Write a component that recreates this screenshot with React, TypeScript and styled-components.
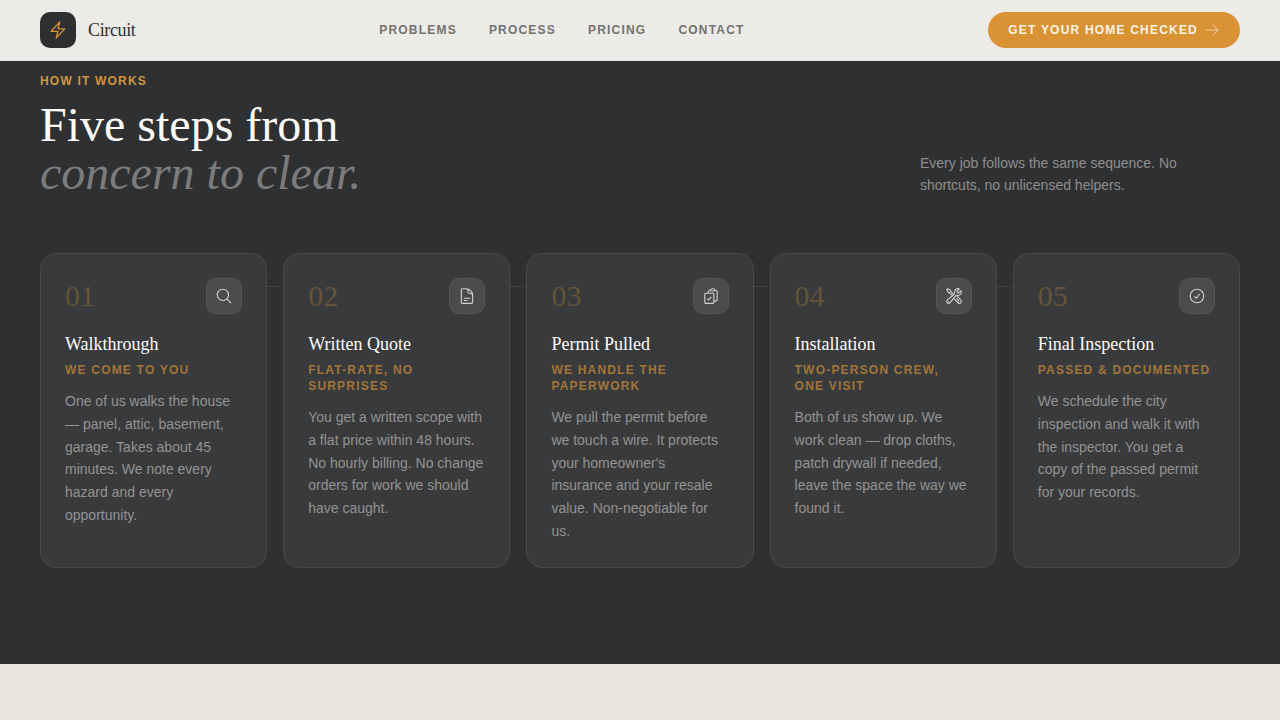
import React from "react";
import styled, { createGlobalStyle } from "styled-components";
import {
  HiOutlineArrowRight,
  HiOutlineBolt,
  HiOutlineCheckCircle,
  HiOutlineClipboardDocumentCheck,
  HiOutlineDocumentText,
  HiOutlineMagnifyingGlass,
  HiOutlineWrenchScrewdriver,
} from "react-icons/hi2";

const Global = createGlobalStyle`
  html, body {
    margin: 0;
    height: 720px;
    overflow: hidden;
    background: #e8e5de;
  }
  * {
    box-sizing: border-box;
  }
`;

const Nav = styled.header`
  height: 61px;
  padding: 0 40px;
  display: flex;
  justify-content: space-between;
  align-items: center;
  background: #ecebe7;
  border-bottom: 1px solid #e4e2dc;
`;

const Brand = styled.div`
  display: flex;
  align-items: center;
  gap: 12px;
`;

const Logo = styled.div`
  width: 36px;
  height: 36px;
  border-radius: 10px;
  background: #2e2f31;
  color: #d99335;
  display: flex;
  align-items: center;
  justify-content: center;
`;

const BrandName = styled.span`
  font-family: "Liberation Serif", serif;
  font-size: 18px;
  letter-spacing: -0.36px;
  color: #2e2f31;
`;

const Links = styled.nav`
  display: flex;
  gap: 32px;
`;

const NavLink = styled.a`
  font-family: "Liberation Sans", sans-serif;
  font-size: 12px;
  font-weight: 700;
  letter-spacing: 1.2px;
  color: #73726f;
`;

const Cta = styled.button`
  height: 36px;
  padding: 0 20px;
  border: 0;
  border-radius: 18px;
  background: #d99335;
  color: #fbf3e4;
  display: flex;
  align-items: center;
  gap: 6px;
  font-family: "Liberation Sans", sans-serif;
  font-size: 12px;
  font-weight: 700;
  letter-spacing: 1.2px;

  svg {
    opacity: 0.6;
  }
`;

const Section = styled.section`
  height: 603px;
  padding: 12px 40px 0;
  background: #2f3032;
`;

const Eyebrow = styled.div`
  font-family: "Liberation Sans", sans-serif;
  font-size: 12px;
  font-weight: 700;
  line-height: 16px;
  letter-spacing: 1.2px;
  color: #d09540;
`;

const Head = styled.div`
  margin-top: 12px;
  display: flex;
  justify-content: space-between;
  align-items: flex-end;
`;

const Title = styled.h2`
  margin: 0;
  font-family: "Liberation Serif", serif;
  font-size: 48px;
  font-weight: 400;
  line-height: 48px;
  color: #fdfcfa;
`;

const TitleSoft = styled.em`
  display: block;
  color: #7b7c7d;
`;

const Lede = styled.p`
  margin: 0 0 1px;
  width: 320px;
  font-family: "Liberation Sans", sans-serif;
  font-size: 14px;
  line-height: 22px;
  color: #8e8e8e;
`;

const Cards = styled.div`
  margin-top: 56px;
  display: grid;
  grid-template-columns: repeat(5, 1fr);
  gap: 16px;
`;

const Card = styled.article`
  position: relative;
  height: 315px;
  padding: 24px;
  background: #393a3c;
  border: 1px solid #48494b;
  border-radius: 16px;
`;

const Connector = styled.span`
  position: absolute;
  top: 32px;
  left: 100%;
  width: 17px;
  height: 1px;
  background: linear-gradient(90deg, #4a4a46, #3a3a38);
`;

const CardTop = styled.div`
  display: flex;
  justify-content: space-between;
  align-items: flex-start;
`;

const Num = styled.span`
  margin-top: 1px;
  font-family: "Liberation Serif", serif;
  font-size: 30px;
  line-height: 34px;
  color: #655439;
`;

const IconBox = styled.div`
  width: 36px;
  height: 36px;
  border-radius: 10px;
  background: #4a4b4c;
  border: 1px solid #555657;
  color: #cfcfce;
  display: flex;
  align-items: center;
  justify-content: center;
`;

const StepName = styled.h3`
  margin: 18px 0 0;
  font-family: "Liberation Serif", serif;
  font-size: 18px;
  font-weight: 400;
  line-height: 24px;
  color: #fdfcfa;
`;

const Tag = styled.div`
  margin-top: 6px;
  font-family: "Liberation Sans", sans-serif;
  font-size: 12px;
  font-weight: 700;
  line-height: 16px;
  letter-spacing: 1.2px;
  color: #a27539;
`;

const Body = styled.p`
  margin: 12px 0 0;
  font-family: "Liberation Sans", sans-serif;
  font-size: 14px;
  line-height: 22.75px;
  color: #939393;
`;

const steps = [
  {
    num: "01",
    icon: <HiOutlineMagnifyingGlass size={18} />,
    name: "Walkthrough",
    tag: "We come to you",
    body: "One of us walks the house — panel, attic, basement, garage. Takes about 45 minutes. We note every hazard and every opportunity.",
  },
  {
    num: "02",
    icon: <HiOutlineDocumentText size={18} />,
    name: "Written Quote",
    tag: "Flat-rate, no surprises",
    body: "You get a written scope with a flat price within 48 hours. No hourly billing. No change orders for work we should have caught.",
  },
  {
    num: "03",
    icon: <HiOutlineClipboardDocumentCheck size={18} />,
    name: "Permit Pulled",
    tag: "We handle the paperwork",
    body: "We pull the permit before we touch a wire. It protects your homeowner's insurance and your resale value. Non-negotiable for us.",
  },
  {
    num: "04",
    icon: <HiOutlineWrenchScrewdriver size={18} />,
    name: "Installation",
    tag: "Two-person crew, one visit",
    body: "Both of us show up. We work clean — drop cloths, patch drywall if needed, leave the space the way we found it.",
  },
  {
    num: "05",
    icon: <HiOutlineCheckCircle size={18} />,
    name: "Final Inspection",
    tag: "Passed & documented",
    body: "We schedule the city inspection and walk it with the inspector. You get a copy of the passed permit for your records.",
  },
];

const App = () => (
  <>
    <Global />
    <Nav>
      <Brand>
        <Logo>
          <HiOutlineBolt size={20} />
        </Logo>
        <BrandName>Circuit</BrandName>
      </Brand>
      <Links>
        <NavLink>PROBLEMS</NavLink>
        <NavLink>PROCESS</NavLink>
        <NavLink>PRICING</NavLink>
        <NavLink>CONTACT</NavLink>
      </Links>
      <Cta>
        GET YOUR HOME CHECKED
        <HiOutlineArrowRight size={16} />
      </Cta>
    </Nav>
    <Section>
      <Eyebrow>HOW IT WORKS</Eyebrow>
      <Head>
        <Title>
          Five steps from
          <TitleSoft>concern to clear.</TitleSoft>
        </Title>
        <Lede>Every job follows the same sequence. No shortcuts, no unlicensed helpers.</Lede>
      </Head>
      <Cards>
        {steps.map((step, i) => (
          <Card key={step.num}>
            {i < steps.length - 1 && <Connector />}
            <CardTop>
              <Num>{step.num}</Num>
              <IconBox>{step.icon}</IconBox>
            </CardTop>
            <StepName>{step.name}</StepName>
            <Tag>{step.tag.toUpperCase()}</Tag>
            <Body>{step.body}</Body>
          </Card>
        ))}
      </Cards>
    </Section>
  </>
);

export default App;
